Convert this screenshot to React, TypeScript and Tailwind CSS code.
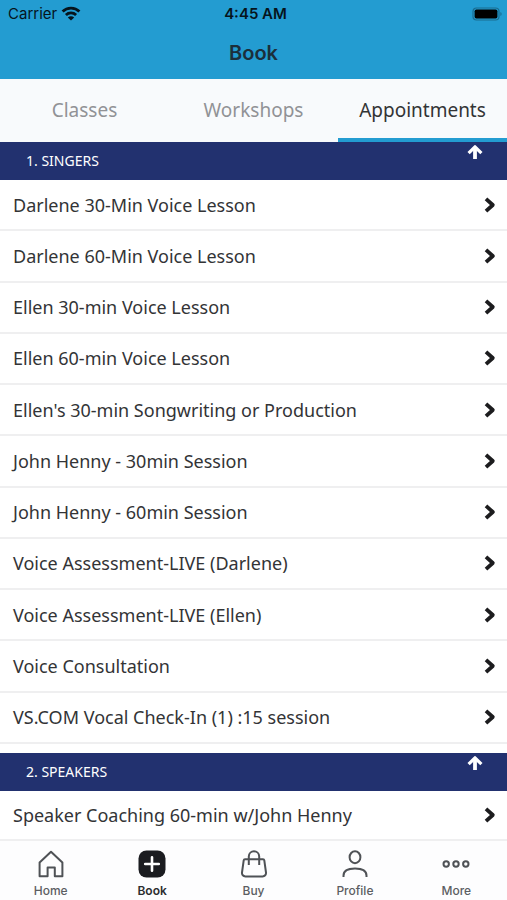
import { clsx } from 'clsx'
import type { ReactNode } from 'react'

const tabs = ['Classes', 'Workshops', 'Appointments']

const singers = [
  'Darlene 30-Min Voice Lesson',
  'Darlene 60-Min Voice Lesson',
  'Ellen 30-min Voice Lesson',
  'Ellen 60-min Voice Lesson',
  "Ellen's 30-min Songwriting or Production",
  'John Henny - 30min Session',
  'John Henny - 60min Session',
  'Voice Assessment-LIVE (Darlene)',
  'Voice Assessment-LIVE (Ellen)',
  'Voice Consultation',
  'VS.COM Vocal Check-In (1) :15 session',
]

const speakers = ['Speaker Coaching 60-min w/John Henny']

function WifiIcon() {
  return (
    <svg width="20" height="15" viewBox="0 0 20 15" fill="none" stroke="#06141c" strokeWidth="2.8" aria-hidden="true">
      <path d="M1.6 5.6C6.2 1 13.8 1 18.4 5.6" />
      <path d="M4.9 9c2.9-2.8 7.3-2.8 10.2 0" />
      <path d="m10 14.6-3.2-3.2c1.8-1.7 4.6-1.7 6.4 0Z" fill="#06141c" stroke="none" />
    </svg>
  )
}

function BatteryIcon() {
  return (
    <svg width="31" height="14" viewBox="0 0 31 14" aria-hidden="true">
      <rect x="1" y="1" width="26" height="12" rx="3.5" fill="none" stroke="#1a6c90" strokeWidth="1.2" />
      <rect x="2.6" y="2.4" width="22.8" height="9.2" rx="1.8" fill="#000" />
      <path d="M28.4 5v4c1.6-.5 1.6-3.5 0-4Z" fill="#1a6c90" />
    </svg>
  )
}

function ChevronIcon() {
  return (
    <svg width="12" height="16" viewBox="0 0 12 16" fill="none" stroke="#1c1c1e" strokeWidth="3.8" strokeLinejoin="round" className="shrink-0" aria-hidden="true">
      <path d="m2 1.8 6.8 6.2L2 14.2" />
    </svg>
  )
}

function ArrowUpIcon() {
  return (
    <svg width="16" height="16" viewBox="0 0 16 16" fill="none" stroke="#fff" strokeWidth="3.2" strokeLinejoin="round" aria-hidden="true">
      <path d="M8 15V3" strokeWidth="3.8" />
      <path d="M1.6 9.2 8 2.8l6.4 6.4" />
    </svg>
  )
}

function StatusBar() {
  return (
    <div className="grid h-7 grid-cols-3 items-center pl-2 pr-1 font-['Inter',sans-serif] text-[15px] text-[#06141c]">
      <span className="flex items-center gap-1">
        Carrier
        <WifiIcon />
      </span>
      <span className="text-center font-semibold">4:45 AM</span>
      <span className="flex justify-end">
        <BatteryIcon />
      </span>
    </div>
  )
}

function SectionHeading({ title }: { title: string }) {
  return (
    <div className="flex h-[38px] shrink-0 justify-between bg-[#22316f] pl-[26px] pr-6 text-white">
      <h2 className="self-center text-sm">{title}</h2>
      <button type="button" aria-label={`Collapse ${title}`} className="mt-[2px] self-start">
        <ArrowUpIcon />
      </button>
    </div>
  )
}

function AppointmentList({ items }: { items: string[] }) {
  return (
    <ul className="flex grow flex-col">
      {items.map((item) => (
        <li key={item} className="flex min-h-[50px] grow border-b-2 border-[#efeff0]">
          <button type="button" className="flex w-full items-center justify-between pl-[13px] pr-[11px] text-left">
            {item}
            <ChevronIcon />
          </button>
        </li>
      ))}
    </ul>
  )
}

function NavItem({ label, active, children }: { label: string; active?: boolean; children: ReactNode }) {
  return (
    <a
      href={`#${label.toLowerCase()}`}
      aria-current={active ? 'page' : undefined}
      className={clsx('flex flex-1 flex-col items-center gap-[5px]', active ? 'font-semibold text-[#2c2d30]' : 'font-medium text-[#5c5e62]')}
    >
      <svg width="28" height="28" viewBox="0 0 28 28" fill="none" stroke="#4f5256" strokeWidth="2" strokeLinejoin="round" aria-hidden="true">
        {children}
      </svg>
      {label}
    </a>
  )
}

function BottomNav() {
  return (
    <nav className="sticky bottom-0 flex h-[59px] shrink-0 bg-[#fdfdfe] pt-[9px] font-['Inter',sans-serif] text-xs leading-4">
      <NavItem label="Home">
        <path d="M2.6 12.6 14 1.8l11.4 10.8v13.6h-7.6v-8.6h-7.2v8.6h-8Z" />
      </NavItem>
      <NavItem label="Book" active>
        <rect x=".5" y=".5" width="27" height="27" rx="8" fill="#1b1c20" stroke="none" />
        <path d="M14 7.2v13.6M7.2 14h13.6" stroke="#fff" strokeWidth="2.6" strokeLinecap="round" />
      </NavItem>
      <NavItem label="Buy">
        <path d="M5 9.2h18c.7 0 1.2.4 1.3 1.1l1.7 12.2c.3 2.2-1.2 3.9-3.4 3.9H5.4c-2.2 0-3.7-1.7-3.4-3.9l1.7-12.2c.1-.7.6-1.1 1.3-1.1Z" />
        <path d="M8.8 15V6.6c0-7 10.4-7 10.4 0V15" />
      </NavItem>
      <NavItem label="Profile">
        <ellipse cx="14" cy="7.2" rx="5.4" ry="6" />
        <path d="M2.5 27v-1.2c0-4 3.4-7.2 11.5-7.2s11.5 3.2 11.5 7.2V27" />
      </NavItem>
      <NavItem label="More">
        <circle cx="4.2" cy="14" r="2.7" />
        <circle cx="14" cy="14" r="2.7" />
        <circle cx="23.8" cy="14" r="2.7" />
      </NavItem>
    </nav>
  )
}

export default function App() {
  return (
    <div className="flex min-h-screen flex-col bg-white font-['Noto_Sans',sans-serif] text-lg text-[#333436]">
      <header className="shrink-0 bg-[#239cd1]">
        <StatusBar />
        <h1 className="h-[51px] text-center font-['Inter',sans-serif] text-xl leading-[50px] font-semibold text-[#1b2f3b]">Book</h1>
      </header>
      <div role="tablist" className="grid h-[63px] shrink-0 grid-cols-3 bg-[#f8fafc] text-[19px]">
        {tabs.map((tab) => {
          const selected = tab === 'Appointments'
          return (
            <button
              key={tab}
              type="button"
              role="tab"
              aria-selected={selected}
              className={clsx('border-b-4 pt-1', selected ? 'border-[#239cd1] text-[#333436]' : 'border-transparent text-[#919296]')}
            >
              {tab}
            </button>
          )
        })}
      </div>
      <main className="flex grow flex-col">
        <section className="flex grow flex-col">
          <SectionHeading title="1. SINGERS" />
          <AppointmentList items={singers} />
        </section>
        <section className="mt-[9px] flex flex-col">
          <SectionHeading title="2. SPEAKERS" />
          <AppointmentList items={speakers} />
        </section>
      </main>
      <BottomNav />
    </div>
  )
}
